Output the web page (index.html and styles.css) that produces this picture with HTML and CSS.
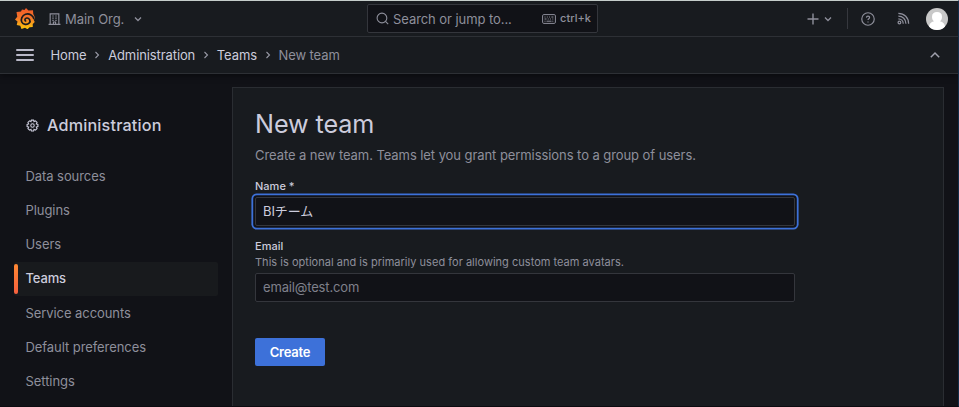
FILE: index.html
```html
<!DOCTYPE html>
<html lang="en">
<head>
<meta charset="utf-8">
<title>New team - Administration - Grafana</title>
<link rel="stylesheet" href="styles.css">
</head>
<body>
<div class="app">
  <header class="chrome">
    <div class="topbar">
      <div class="topbar-left">
        <svg class="logo" viewBox="0 0 40 42">
          <defs><linearGradient id="flame" x1="0" y1="0" x2="0" y2="1"><stop offset="0" stop-color="#f05a28"/><stop offset=".45" stop-color="#f4742a"/><stop offset="1" stop-color="#fbca0a"/></linearGradient></defs>
          <path fill="url(#flame)" d="M22 0l5 5 9-.5.500 7.500c2 3 3 6 3 10l-2.500 1 2.500 5-4 4 0 6-6.500.5-4 4-5-3-7 2.500-2.500-6.500-7-1.500 1.500-7L0 23l4.500-5.500L3 8l9-1L14 3l5 1z"/>
          <path class="swirl" d="M38 22C36 14 28 10 21 12.500S11 22.500 13.500 28s11 6.500 15 2-.5-10.500-5-10-5 6-1 6.500"/>
        </svg>
        <svg class="building" viewBox="0 0 24 24"><path d="M4 22V2.500h16V22M1 22h22M10 22v-4.500h4V22M8 6.500h2.500M13.500 6.500H16M8 10.500h2.500M13.500 10.500H16M8 14.500h2.500M13.500 14.500H16"/></svg>
        <span class="org">Main Org.</span>
        <svg class="chev org-chev" viewBox="0 0 12 12"><path d="M3 4.500l3 3 3-3"/></svg>
      </div>
      <div class="search">
        <svg class="search-icon" viewBox="0 0 24 24"><circle cx="11" cy="11" r="9"/><path d="M17.500 17.500l5 5"/></svg>
        <span class="search-text">Search or jump to...</span>
        <svg class="keyboard" viewBox="0 0 14 10"><rect x=".6" y=".6" width="12.800" height="8.800" rx="1.200"/><path d="M2.500 3h1M4.800 3h1M7.100 3h1M9.400 3h2M2.500 5h2M5.700 5h1M7.900 5h1M10.300 5h1M2.500 7.200h1M4.500 7.200h5M10.300 7.200h1"/></svg>
        <span class="shortcut">ctrl+k</span>
      </div>
      <div class="topbar-right">
        <svg class="plus" viewBox="0 0 12 12"><path d="M6 .5v11M.5 6h11"/></svg>
        <svg class="chev plus-chev" viewBox="0 0 12 12"><path d="M3 4.500l3 3 3-3"/></svg>
        <span class="divider"></span>
        <svg class="help" viewBox="0 0 24 24"><circle cx="12" cy="12" r="10.700"/><path d="M9.300 9.600C9.500 6 15 6.300 14.700 9.700 14.500 11.500 12 11.600 12 13.600M12 16.200v1.600"/></svg>
        <svg class="rss" viewBox="0 0 24 24"><circle cx="4.500" cy="19.500" r="2.500"/><path d="M2.500 12.500c5 0 9 4 9 9M2.500 7.500c8 0 14 6 14 14M2.500 2.500c11 0 19 8 19 19"/></svg>
        <svg class="avatar" viewBox="0 0 22 22"><clipPath id="round"><circle cx="11" cy="11" r="11"/></clipPath><g clip-path="url(#round)"><path fill="#c8c8c8" d="M0 0h22v22H0z"/><path fill="#fff" d="M6 8.700C6 5.500 8 4 11 4s5 1.500 5 4.700c0 2-.7 3.500-2 4.500 3 .7 5 3 5 5.500V22H3v-3.300c0-2.500 2-4.800 5-5.500-1.300-1-2-2.500-2-4.500z"/></g></svg>
      </div>
    </div>
    <nav class="crumbs">
      <span class="burger"><i></i><i></i><i></i></span>
      <a>Home</a>
      <svg class="sep" viewBox="0 0 6 8"><path d="M1.500 1l3 3-3 3"/></svg>
      <a>Administration</a>
      <svg class="sep" viewBox="0 0 6 8"><path d="M1.500 1l3 3-3 3"/></svg>
      <a>Teams</a>
      <svg class="sep" viewBox="0 0 6 8"><path d="M1.500 1l3 3-3 3"/></svg>
      <span class="current">New team</span>
      <svg class="collapse" viewBox="0 0 12 8"><path d="M1.800 6.200L6 2l4.200 4.200"/></svg>
    </nav>
  </header>
  <div class="body">
    <aside class="side">
      <h2 class="side-title">
        <svg class="gear" viewBox="0 0 24 24"><path d="M10 2h4l.8 2.800 2.600-1.400 3 3L19 9.100l3 .9v4l-3 .9 1.400 2.700-3 3-2.600-1.400L14 22h-4l-.8-2.800-2.600 1.400-3-3L5 14.900 2 14v-4l3-.9-1.400-2.700 3-3 2.600 1.400z"/><circle cx="12" cy="12" r="3.200"/></svg>
        <span>Administration</span>
      </h2>
      <nav class="menu">
        <a>Data sources</a>
        <a>Plugins</a>
        <a>Users</a>
        <a class="active">Teams</a>
        <a>Service accounts</a>
        <a>Default preferences</a>
        <a>Settings</a>
      </nav>
    </aside>
    <main class="panel">
      <h1>New team</h1>
      <p class="lead">Create a new team. Teams let you grant permissions to a group of users.</p>
      <form class="form">
        <label class="name-label">Name *</label>
        <div class="input focused">BIチーム</div>
        <label class="email-label">Email</label>
        <p class="hint">This is optional and is primarily used for allowing custom team avatars.</p>
        <div class="input placeholder">email@test.com</div>
        <button type="button" class="create">Create</button>
      </form>
    </main>
  </div>
</div>
</body>
</html>
```
FILE: styles.css
```css
* { box-sizing: border-box; }
body {
  margin: 0;
  background: #111217;
  color: #ccccdc;
  font-family: Inter, "Noto Sans CJK JP", sans-serif;
  font-size: 13px;
  letter-spacing: -.07px;
}
h1, h2, p { margin: 0; font-weight: 400; }
svg { display: block; flex: none; fill: none; stroke: currentColor; }
.app {
  width: 959px;
  height: 407px;
  overflow: hidden;
  display: flex;
  flex-direction: column;
  border-top: 1px solid #c5cdca;
  border-right: 1px solid #132d4a;
  border-bottom: 1px solid #0c0b10;
}
.chrome {
  flex: none;
  background: #181b1f;
  border-bottom: 1px solid #2d3035;
  box-shadow: 0 1px 6px #08090c;
}
.topbar {
  height: 36px;
  display: grid;
  grid-template-columns: 367px 231px 1fr;
  align-items: center;
  border-bottom: 1px solid #2d3035;
  color: #8e8f9b;
}
.topbar-left { display: flex; align-items: center; padding-left: 15px; }
.logo { width: 20px; height: 21px; stroke: none; }
.swirl { stroke: #181b1f; stroke-width: 3.4; }
.building { width: 13px; height: 14px; margin-left: 13px; stroke-width: 2.1; }
.org { margin-left: 4px; }
.chev { width: 12px; height: 12px; stroke-width: 1.3; }
.org-chev { margin-left: 8px; }
.search {
  height: 29px;
  display: flex;
  align-items: center;
  padding: 0 6px 0 8px;
  background: #111217;
  border: 1px solid #34363c;
  border-radius: 2px;
}
.search-icon { width: 13px; height: 13px; stroke-width: 2; }
.search-text { margin-left: 4px; }
.keyboard { width: 14px; height: 10px; margin-left: auto; }
.shortcut { font-size: 11px; font-weight: 500; margin: -2px 0 0 4px; letter-spacing: .02px; }
.topbar-right { display: flex; align-items: center; justify-content: flex-end; padding-right: 10px; }
.plus { width: 12px; height: 12px; stroke-width: 1.4; }
.plus-chev { margin-left: 3px; }
.divider { width: 1px; height: 21px; margin: 0 13px 0 13px; background: #36383e; }
.help { width: 14px; height: 14px; stroke-width: 2; }
.rss { width: 13px; height: 13px; margin: 0 16px 0 22px; stroke-width: 2.3; }
.avatar { width: 22px; height: 22px; stroke: none; }
.crumbs { height: 36px; display: flex; align-items: center; padding: 0 17px 0 16px; letter-spacing: -.1px; }
.burger { width: 18px; display: grid; gap: 3px; margin-right: 16.500px; }
.burger i { height: 2px; background: #b9b9c8; border-radius: 1px; }
.sep { width: 6px; height: 8px; margin: 0 7.800px; color: #9899a5; stroke-width: 1.1; }
.current { color: #8e8f9b; }
.collapse { width: 12px; height: 8px; margin-left: auto; stroke-width: 1.5; color: #a0a1ad; }
.body { flex: 1; min-height: 0; display: flex; padding: 13px 14px 0 14px; }
.side { width: 204px; flex: none; margin-right: 14px; }
.side-title {
  height: 22px;
  margin: 27px 0 23px;
  padding-left: 12px;
  display: flex;
  align-items: center;
  font-size: 16.2px;
  font-weight: 500;
  letter-spacing: .16px;
}
.gear { width: 13px; height: 13px; margin-right: 8px; stroke-width: 2; }
.menu { display: grid; grid-auto-rows: 34.200px; color: #8e8f9b; }
.menu a { display: flex; align-items: center; padding-left: 11.500px; }
.menu .active { position: relative; color: #ccccdc; background: #181a1d; border-radius: 2px; font-weight: 500; letter-spacing: -.15px; padding-bottom: 1px; }
.active::before {
  content: "";
  position: absolute;
  left: 0;
  top: 2px;
  bottom: 2px;
  width: 4px;
  border-radius: 2px;
  background: linear-gradient(#ff8833, #f55f3e);
}
.panel {
  flex: 1;
  padding: 20px 22px 0;
  background: #181b1f;
  border: 1px solid #2a2d32;
  border-bottom: 0;
}
h1 { font-size: 25.2px; line-height: 32px; letter-spacing: -.1px; }
.lead { margin-top: 6px; line-height: 18px; color: #8e8f9b; }
.form { width: 540px; display: flex; flex-direction: column; align-items: flex-start; }
label { font-size: 11px; font-weight: 500; line-height: 14px; letter-spacing: .02px; }
.name-label { margin-top: 15px; margin-bottom: 4px; }
.input {
  width: 540px;
  height: 29px;
  display: flex;
  align-items: center;
  padding: 0 7px 1px;
  background: #111217;
  border: 1px solid #34363c;
  border-radius: 2px;
}
.focused { box-shadow: 0 0 0 1.8px #111217, 0 0 0 3.6px #3d71d9; padding-bottom: 2px; }
.email-label { margin-top: 13px; }
.hint { font-size: 11px; line-height: 14px; margin: 2px 0 4px; color: #8e8f9b; letter-spacing: .02px; }
.placeholder { color: #7f808b; letter-spacing: -.15px; }
.create {
  width: 70px;
  height: 28px;
  margin-top: 36px;
  padding: 0 0 1px;
  border: 0;
  border-radius: 2px;
  background: #3d71d9;
  color: #fff;
  font: 600 13px Inter, sans-serif;
  letter-spacing: -.2px;
}
```
